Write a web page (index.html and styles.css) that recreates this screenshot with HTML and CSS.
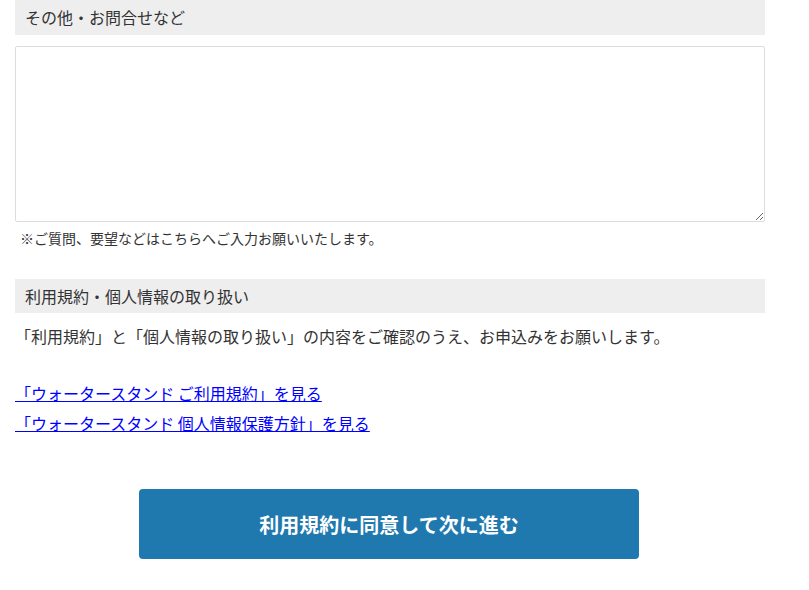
FILE: index.html
```html
<!DOCTYPE html>
<html lang="ja">
<head>
<meta charset="utf-8">
<link rel="stylesheet" href="styles.css">
</head>
<body>
<div class="wrap">
  <div class="head">その他・お問合せなど</div>
  <textarea class="area"></textarea>
  <p class="note">※ご質問、要望などはこちらへご入力お願いいたします。</p>
  <div class="head head2">利用規約・個人情報の取り扱い</div>
  <p class="lead">「利用規約」と「個人情報の取り扱い」の内容をご確認のうえ、お申込みをお願いします。</p>
  <div class="links">
    <a href="#">「ウォータースタンド ご利用規約」を見る</a>
    <a href="#">「ウォータースタンド 個人情報保護方針」を見る</a>
  </div>
  <div class="btn-row">
    <button class="btn" type="button">利用規約に同意して次に進む</button>
  </div>
</div>
</body>
</html>
```
FILE: styles.css
```css
html, body {
  margin: 0;
  padding: 0;
  background: #fff;
}
body {
  font-family: "Noto Sans CJK JP", "Noto Sans", sans-serif;
  color: #333;
}
.wrap {
  width: 750px;
  margin-left: 15px;
}
.head {
  background: #eee;
  height: 35px;
  line-height: 35px;
  padding-left: 10px;
  font-size: 16px;
  color: #333;
}
.area {
  display: block;
  box-sizing: border-box;
  width: 750px;
  height: 176px;
  margin-top: 11px;
  border: 1px solid #ddd;
  border-radius: 2px;
  resize: vertical;
}
.note {
  margin: 7px 0 0 5px;
  font-size: 14px;
  line-height: 18px;
}
.head2 {
  margin-top: 32px;
  height: 34px;
  line-height: 34px;
}
.lead {
  margin: 12px 0 0 0;
  font-size: 16px;
  line-height: 22px;
}
.links {
  margin-top: 31px;
  display: flex;
  flex-direction: column;
  align-items: flex-start;
}
.links a {
  font-size: 16px;
  line-height: 30px;
  color: #00f;
}
.btn-row {
  margin-top: 51px;
  padding-left: 124px;
}
.btn {
  width: 500px;
  height: 70px;
  border: none;
  border-radius: 4px;
  background: #2079ae;
  color: #fff;
  font-family: "Noto Sans CJK JP", sans-serif;
  font-size: 20px;
  font-weight: bold;
}
```
